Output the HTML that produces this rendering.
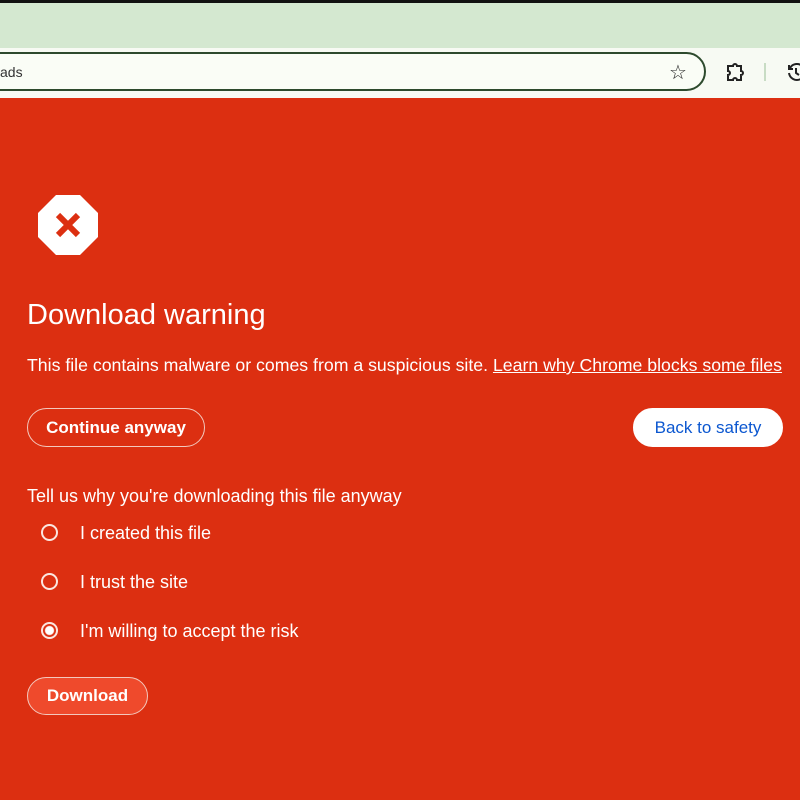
<!DOCTYPE html>
<html><head><style>
*{margin:0;padding:0;box-sizing:border-box}
body{width:800px;height:800px;overflow:hidden;background:#dc2f11;font-family:"Liberation Sans",sans-serif;position:relative;color:#fff}
.top{position:absolute;left:0;top:0;width:800px;height:3px;background:#111}
.tabs{position:absolute;left:0;top:3px;width:800px;height:45px;background:#d4e8d0}
.tool{position:absolute;left:0;top:48px;width:800px;height:50px;background:#f7faf3}
.addr{position:absolute;left:-40px;top:52px;width:746px;height:39px;border:2px solid #2d4a2d;border-radius:20px;background:#fafdf6}
.addr span{position:absolute;left:38px;top:10px;font-size:14px;color:#333}
.abs{position:absolute}
.t{position:absolute;white-space:nowrap}
.btn{position:absolute;border:1.5px solid #f3c8bd;border-radius:20px;font-weight:bold;font-size:17px;text-align:center}
.radio{position:absolute;width:17px;height:17px;border:2.5px solid #fbe6e0;border-radius:50%}
</style></head><body>
<div class="top"></div><div class="tabs"></div><div class="tool"></div>
<div class="addr"><span>ads</span></div>
<div class="t" style="left:669px;top:60px;font-size:20px;color:#222">☆</div>
<svg class="abs" style="left:724px;top:61px" width="22" height="22" viewBox="0 0 22 22"><path d="M4 5h5a2 2 0 0 1 4 0h4v5a2 2 0 0 1 0 4v5h-4a2 2 0 0 0-4 0H4v-5a2 2 0 0 0 0-4z" fill="none" stroke="#222" stroke-width="2"/></svg>
<div class="abs" style="left:764px;top:63px;width:2px;height:18px;background:#c8dcc4"></div>
<svg class="abs" style="left:786px;top:62px" width="20" height="20" viewBox="0 0 20 20"><path d="M4 6a8 8 0 1 1-1 5M3 3v4h4M10 6v5l3 2" fill="none" stroke="#222" stroke-width="2"/></svg>
<svg class="abs" style="left:37px;top:194px" width="62" height="62" viewBox="0 0 62 62"><polygon points="19,1 43,1 61,19 61,43 43,61 19,61 1,43 1,19" fill="#fff"/><path d="M21 21l20 20M41 21l-20 20" stroke="#dc2f11" stroke-width="6"/></svg>
<div class="t" style="left:27px;top:299px;font-size:29px">Download warning</div>
<div class="t" style="left:27px;top:355px;font-size:17.7px">This file contains malware or comes from a suspicious site. <u>Learn why Chrome blocks some files</u></div>
<div class="btn" style="left:27px;top:408px;width:178px;height:39px;line-height:37px">Continue anyway</div>
<div class="btn" style="left:633px;top:408px;width:150px;height:39px;line-height:37px;background:#fff;color:#0b57d0;border-color:#fff;font-weight:normal">Back to safety</div>
<div class="t" style="left:27px;top:486px;font-size:18px">Tell us why you're downloading this file anyway</div>
<div class="radio" style="left:41px;top:524px"></div>
<div class="t" style="left:80px;top:523px;font-size:18px">I created this file</div>
<div class="radio" style="left:41px;top:573px"></div>
<div class="t" style="left:80px;top:572px;font-size:18px">I trust the site</div>
<div class="radio" style="left:41px;top:622px;background:radial-gradient(circle,#fff 0 4px,#dc2f11 5px)"></div>
<div class="t" style="left:80px;top:621px;font-size:18px">I'm willing to accept the risk</div>
<div class="btn" style="left:27px;top:677px;width:121px;height:38px;line-height:36px;background:#ef4a2c">Download</div>
</body></html>
